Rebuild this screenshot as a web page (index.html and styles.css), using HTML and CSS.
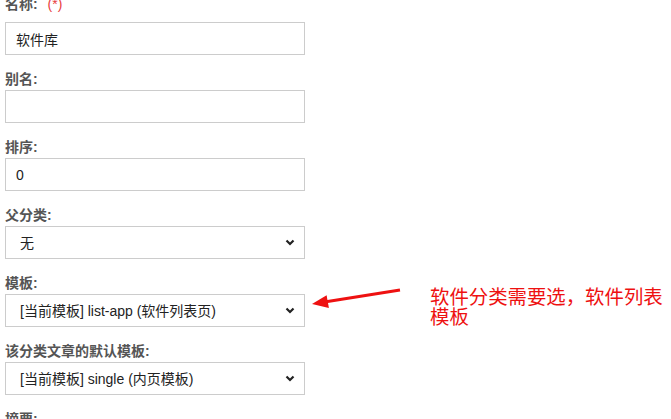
FILE: index.html
```html
<!DOCTYPE html>
<html lang="zh-CN">

<head>
    <meta charset="UTF-8">
    <meta name="viewport" content="width=device-width, initial-scale=1.0">
    <title>分类编辑</title>
    <link rel="stylesheet" href="styles.css">
</head>

<body>
    <!-- 分类表单 -->
    <form class="cate-form">
        <label class="field-label first">名称: <span class="required">(*)</span></label>
        <input class="field-input" type="text" value="软件库">

        <label class="field-label">别名:</label>
        <input class="field-input" type="text" value="">

        <label class="field-label">排序:</label>
        <input class="field-input" type="text" value="0">

        <label class="field-label">父分类:</label>
        <div class="select-box">
            <select class="field-select">
                <option>无</option>
            </select>
            <svg class="chevron" width="10" height="7" viewBox="0 0 10 7">
                <path d="M1.5 1.5 L5 5 L8.5 1.5" fill="none" stroke="#222" stroke-width="2.2" />
            </svg>
        </div>

        <label class="field-label">模板:</label>
        <div class="select-box">
            <select class="field-select">
                <option>[当前模板] list-app (软件列表页)</option>
            </select>
            <svg class="chevron" width="10" height="7" viewBox="0 0 10 7">
                <path d="M1.5 1.5 L5 5 L8.5 1.5" fill="none" stroke="#222" stroke-width="2.2" />
            </svg>
        </div>

        <label class="field-label">该分类文章的默认模板:</label>
        <div class="select-box">
            <select class="field-select">
                <option>[当前模板] single (内页模板)</option>
            </select>
            <svg class="chevron" width="10" height="7" viewBox="0 0 10 7">
                <path d="M1.5 1.5 L5 5 L8.5 1.5" fill="none" stroke="#222" stroke-width="2.2" />
            </svg>
        </div>

        <label class="field-label">摘要:</label>
    </form>

    <!-- 标注 -->
    <svg class="note-arrow" width="110" height="40" viewBox="0 0 110 40">
        <line x1="100" y1="10" x2="26" y2="21.8" stroke="#ee1111" stroke-width="3" />
        <polygon points="12,24 26.6,15.2 28.9,28" fill="#ee1111" />
    </svg>
    <p class="note-text">软件分类需要选，软件列表模板</p>
</body>

</html>
```

FILE: styles.css
```css
* {
    padding: 0;
    margin: 0;
    box-sizing: border-box;
}

body {
    position: relative;
    width: 671px;
    height: 419px;
    overflow: hidden;
    background-color: #fff;
    font-family: "Liberation Sans", "Noto Sans CJK SC", sans-serif;
    color: #222;
}

.cate-form {
    display: flex;
    flex-direction: column;
    width: 300px;
    margin: -5px 0 0 5px;
}

.field-label {
    display: block;
    height: 18px;
    line-height: 18px;
    font-size: 14px;
    font-weight: bold;
    color: #555;
    margin-bottom: 2px;
}

.field-label.first {
    margin-bottom: 9px;
}

.required {
    font-weight: normal;
    color: #e84040;
    margin-left: 6px;
}

.field-input,
.field-select {
    display: block;
    width: 300px;
    height: 33px;
    border: 1px solid #ccc;
    background-color: #fff;
    font-family: "Liberation Sans", "Noto Sans CJK SC", sans-serif;
    font-size: 14px;
    color: #222;
    outline: none;
}

.field-input {
    padding: 0 10px;
    margin-bottom: 15px;
}

.select-box {
    position: relative;
    margin-bottom: 15px;
}

.field-select {
    appearance: none;
    -webkit-appearance: none;
    padding: 0 14px;
    border-radius: 0;
}

.chevron {
    position: absolute;
    right: 10px;
    top: 13px;
}

.note-arrow {
    position: absolute;
    left: 300px;
    top: 280px;
}

.note-text {
    position: absolute;
    left: 430px;
    top: 286px;
    width: 241px;
    font-family: "Noto Sans CJK SC", sans-serif;
    font-size: 19.4px;
    line-height: 20px;
    color: #ee1111;
}
```
